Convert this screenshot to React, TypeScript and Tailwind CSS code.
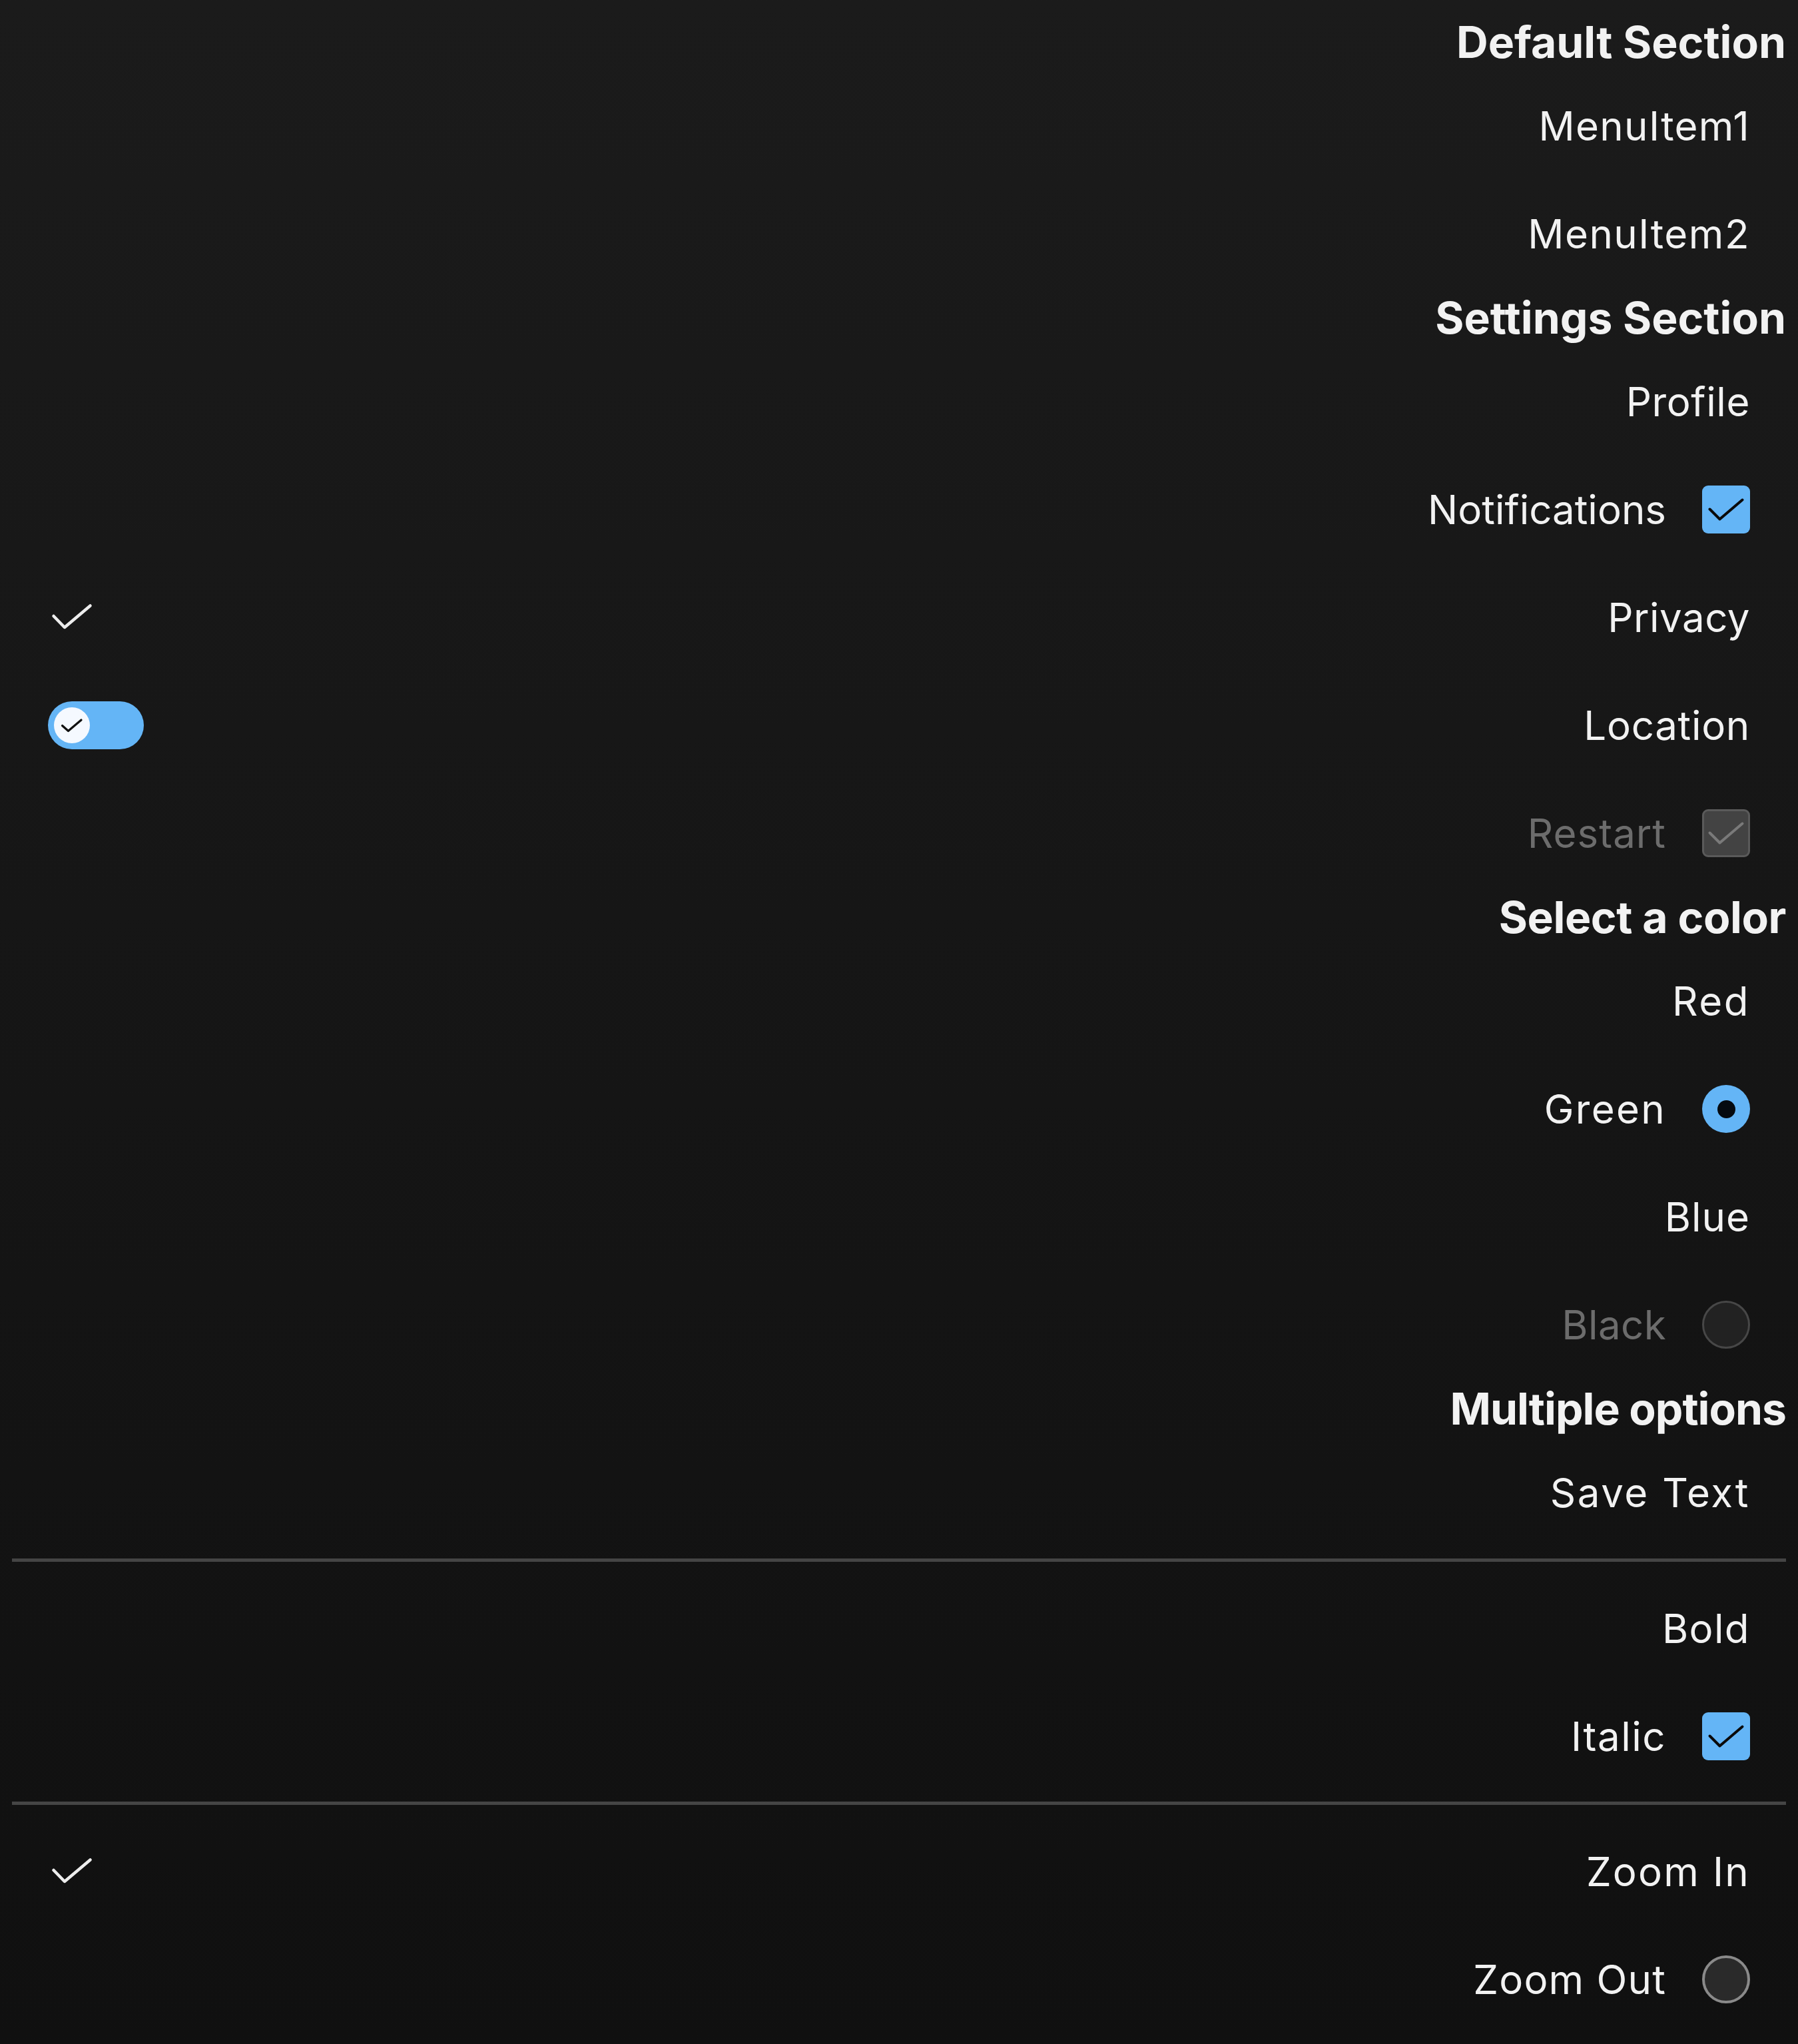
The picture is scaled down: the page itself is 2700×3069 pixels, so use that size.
import React from "react";

// Right-aligned settings menu, dark theme. Sizes follow a 3x density screen.

function CheckMark({ stroke = "#0a0a0a", width = 4 }: { stroke?: string; width?: number }) {
  return (
    <svg viewBox="0 0 72 72" className="h-full w-full" aria-hidden>
      <polyline
        points="11.5,35.5 26.5,50.5 60.5,21.5"
        fill="none"
        stroke={stroke}
        strokeWidth={width}
        strokeLinecap="round"
        strokeLinejoin="round"
      />
    </svg>
  );
}

function Checkbox({ disabled }: { disabled?: boolean }) {
  if (disabled) {
    return (
      <div className="h-[72px] w-[72px] rounded-[9px] border-[3px] border-[#5a5a5a] bg-[#434343]">
        <div className="-m-[3px] h-[72px] w-[72px]">
          <CheckMark stroke="#7a7a7a" />
        </div>
      </div>
    );
  }
  return (
    <div className="h-[72px] w-[72px] rounded-[9px] bg-[#64b5f6]">
      <CheckMark />
    </div>
  );
}

function Radio({ selected, tone = "muted" }: { selected?: boolean; tone?: "muted" | "light" }) {
  if (selected) {
    return (
      <div className="flex h-[72px] w-[72px] items-center justify-center rounded-full bg-[#64b5f6]">
        <div className="h-[27px] w-[27px] rounded-full bg-[#050a10]" />
      </div>
    );
  }
  return (
    <div
      className={
        tone === "light"
          ? "h-[72px] w-[72px] rounded-full border-[4px] border-[#8a8a8a] bg-[#2a2a2a]"
          : "h-[72px] w-[72px] rounded-full border-[3px] border-[#474747] bg-[#222222]"
      }
    />
  );
}

function Toggle() {
  return (
    <div className="flex h-[72px] w-[144px] items-center rounded-full bg-[#64b5f6] pl-[9px]">
      <div className="h-[54px] w-[54px] rounded-full bg-[#f5f9ff]">
        <svg viewBox="0 0 54 54" className="h-full w-full" aria-hidden>
          <polyline
            points="12.5,27.5 21.5,35.5 41,19"
            fill="none"
            stroke="#111"
            strokeWidth={3.2}
            strokeLinecap="round"
            strokeLinejoin="round"
          />
        </svg>
      </div>
    </div>
  );
}

function LeadingCheck() {
  return (
    <div className="h-[72px] w-[72px]">
      <svg viewBox="0 0 72 72" className="h-full w-full" aria-hidden>
        <polyline
          points="8.5,34 25,51 63.5,18.5"
          fill="none"
          stroke="#ededed"
          strokeWidth={4.5}
          strokeLinecap="round"
          strokeLinejoin="round"
        />
      </svg>
    </div>
  );
}

function Header({ children, className = "" }: { children: React.ReactNode; className?: string }) {
  return (
    <div
      className={`flex h-[90px] items-center justify-end text-[66px] leading-none font-bold text-[#f2f2f2] ${className}`}
    >
      {children}
    </div>
  );
}

function Item({
  label,
  leading,
  trailing,
  disabled,
  tracking = "",
}: {
  label: string;
  leading?: React.ReactNode;
  trailing?: React.ReactNode;
  disabled?: boolean;
  tracking?: string;
}) {
  return (
    <div className="flex h-[162px] items-center px-[54px]">
      <div className="flex w-[144px] items-center">{leading}</div>
      <div className="flex-1" />
      <span
        className={`text-[60px] leading-none whitespace-nowrap ${tracking} ${
          disabled ? "text-[#6c6c6c]" : "text-[#f2f2f2]"
        }`}
      >
        {label}
      </span>
      {trailing && <div className="ml-[54px] flex items-center">{trailing}</div>}
    </div>
  );
}

function Divider({ top }: { top: string }) {
  return <div className={`${top} mb-[19px] h-[5px] bg-[#454545]`} />;
}

export default function App() {
  return (
    <div className="min-h-screen w-full bg-linear-to-b from-[#1b1b1b] to-[#101010] px-[18px] pt-[18px] pb-[16px] [font-family:Inter,'Noto_Sans',sans-serif]">
      <Header>Default Section</Header>
      <Item label="MenuItem1" tracking="tracking-[1.3px]" />
      <Item label="MenuItem2" tracking="tracking-[1.5px]" />

      <Header>Settings Section</Header>
      <Item label="Profile" tracking="tracking-[0.6px]" />
      <Item label="Notifications" trailing={<Checkbox />} />
      <Item label="Privacy" tracking="tracking-[0.5px]" leading={<LeadingCheck />} />
      <Item label="Location" tracking="tracking-[0.7px]" leading={<Toggle />} />
      <Item label="Restart" tracking="tracking-[1px]" disabled trailing={<Checkbox disabled />} />

      <Header className="tracking-[-0.4px]">Select a color</Header>
      <Item label="Red" tracking="tracking-[2.5px]" />
      <Item label="Green" tracking="tracking-[2.3px]" trailing={<Radio selected />} />
      <Item label="Blue" tracking="tracking-[1px]" />
      <Item label="Black" tracking="tracking-[0.4px]" disabled trailing={<Radio />} />

      <Header className="tracking-[-1px]">Multiple options</Header>
      <Item label="Save Text" tracking="tracking-[2.6px]" />
      <Divider top="mt-[18px]" />
      <Item label="Bold" tracking="tracking-[1.4px]" />
      <Item label="Italic" tracking="tracking-[1.5px]" trailing={<Checkbox />} />
      <Divider top="mt-[17px]" />
      <Item label="Zoom In" tracking="tracking-[2.2px]" leading={<LeadingCheck />} />
      <Item label="Zoom Out" tracking="tracking-[1.2px]" trailing={<Radio tone="light" />} />
    </div>
  );
}
